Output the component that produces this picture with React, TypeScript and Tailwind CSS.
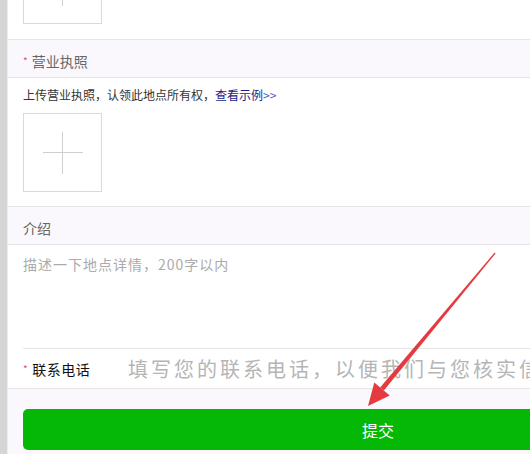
import React from "react";

const font = { fontFamily: '"Noto Sans CJK SC", "Noto Sans", sans-serif' };

function PlusBox({ className = "" }: { className?: string }) {
  return (
    <div className={"relative w-[79px] h-[79px] border border-[#dadada] bg-white " + className}>
      <div className="absolute left-[19px] top-[38px] w-[40px] h-[1px] bg-[#cfcfcf]" />
      <div className="absolute left-[38px] top-[18px] w-[1px] h-[42px] bg-[#cfcfcf]" />
    </div>
  );
}

function Header({ label, required }: { label: string; required?: boolean }) {
  return (
    <div className="h-[39px] bg-[#faf8fc] border-t border-b border-[#e6e4ea] pl-[15px] pt-[13px] text-[14px] leading-[16px] text-[#666]">
      {required && <span className="text-[#d5507a] text-[10px] align-top mr-[4px]">*</span>}
      {label}
    </div>
  );
}

export default function App() {
  return (
    <div className="relative w-[530px] h-[454px] overflow-hidden flex bg-white" style={font}>
      <div className="w-[7px] shrink-0 bg-[#d5d5d5]" />
      <div className="w-[1px] shrink-0 bg-[#ececec]" />
      <div className="w-[740px] shrink-0 flex flex-col bg-white">
        {/* top cut-off box */}
        <div className="pl-[15px] pb-[15px]">
          <PlusBox className="-mt-[55px]" />
        </div>
        <Header label="营业执照" required />
        <div className="pl-[15px] pt-[9px] pb-[14px]">
          <div className="text-[12px] leading-[16px] text-[#333]">
            上传营业执照，认领此地点所有权，
            <span className="text-[#1a1a8a]">查看示例</span>
            <span className="text-[#4a5ad0]">&gt;&gt;</span>
          </div>
          <PlusBox className="mt-[10px]" />
        </div>
        <Header label="介绍" />
        <div className="ml-[15px] h-[104px] border-b border-[#e6e6e6] pt-[11px] text-[14px] leading-[16px] tracking-[1px] text-[#ababab]">
          描述一下地点详情，200字以内
        </div>
        <div className="h-[40px] flex items-center border-b border-[#e6e6e6] pl-[15px]">
          <div className="w-[105px] shrink-0 text-[14px] leading-[16px] text-[#111] tracking-[0.5px]">
            <span className="text-[#d5507a] text-[10px] align-top mr-[4px]">*</span>
            联系电话
          </div>
          <div className="text-[20px] leading-[22px] tracking-[3px] text-[#b5b5b5] whitespace-nowrap">
            填写您的联系电话，以便我们与您核实信息
          </div>
        </div>
        <div className="flex-1 bg-[#faf8fc] px-[15px] pt-[20px]">
          <div className="h-[41px] rounded-[5px] bg-[#06b806] flex items-center justify-center text-white text-[16px]">
            提交
          </div>
        </div>
      </div>
      <svg className="absolute left-0 top-0 pointer-events-none" width="530" height="454" viewBox="0 0 530 454">
        <polygon points="495.6,253.4 494.6,252.6 380.1,387.4 383.9,390.6" fill="#e53a3f" />
        <polygon points="368,406 374.3,382.6 389.7,395.4" fill="#e53a3f" />
      </svg>
    </div>
  );
}
